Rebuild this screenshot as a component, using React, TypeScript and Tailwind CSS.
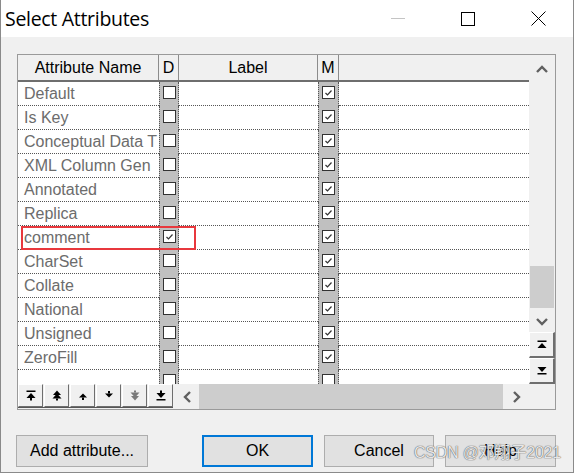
import React from 'react';

type Row = { name: string; d: boolean; m: boolean };

const rows: Row[] = [
  { name: 'Default', d: false, m: true },
  { name: 'Is Key', d: false, m: true },
  { name: 'Conceptual Data T', d: false, m: true },
  { name: 'XML Column Gen', d: false, m: true },
  { name: 'Annotated', d: false, m: true },
  { name: 'Replica', d: false, m: true },
  { name: 'comment', d: true, m: true },
  { name: 'CharSet', d: false, m: true },
  { name: 'Collate', d: false, m: true },
  { name: 'National', d: false, m: true },
  { name: 'Unsigned', d: false, m: true },
  { name: 'ZeroFill', d: false, m: true },
  { name: '', d: false, m: false },
];

const Box = ({ checked }: { checked: boolean }) => (
  <div className="w-[13px] h-[13px] border border-[#333] bg-white flex items-center justify-center">
    {checked && (
      <svg width="11" height="11" viewBox="0 0 11 11">
        <path d="M2.5 6 L4.5 8 L8.5 3.5" fill="none" stroke="#333" strokeWidth="1.2" />
      </svg>
    )}
  </div>
);

const Chevron = ({ dir }: { dir: 'up' | 'down' | 'left' | 'right' }) => {
  const d = {
    up: 'M1 7 L6 2 L11 7',
    down: 'M1 2 L6 7 L11 2',
    left: 'M7 1 L2 6 L7 11',
    right: 'M2 1 L7 6 L2 11',
  }[dir];
  const w = dir === 'up' || dir === 'down' ? 12 : 9;
  const h = dir === 'up' || dir === 'down' ? 9 : 12;
  return (
    <svg width={w} height={h} viewBox={`0 0 ${w} ${h}`}>
      <path d={d} fill="none" stroke="#606060" strokeWidth="2.4" />
    </svg>
  );
};

// small black glyphs for the move buttons
const MoveIcon = ({ kind, gray }: { kind: string; gray?: boolean }) => {
  const c = gray ? '#7a7a7a' : '#000';
  return (
    <svg width="10" height="11" viewBox="0 0 10 11" fill={c}>
      {kind === 'top' && (
        <>
          <rect x="0.5" y="0.5" width="9" height="1.5" />
          <polygon points="5,3 0.5,8 9.5,8" />
          <rect x="4" y="8" width="2" height="2.5" />
        </>
      )}
      {kind === 'pgup' && (
        <>
          <polygon points="5,0.5 1,5 9,5" />
          <polygon points="5,3.5 0.5,8.5 9.5,8.5" />
          <rect x="4" y="8.5" width="2" height="2" />
        </>
      )}
      {kind === 'up' && (
        <>
          <polygon points="5,3.5 1,7.5 9,7.5" />
          <rect x="4" y="7.5" width="2" height="2.5" />
        </>
      )}
      {kind === 'down' && (
        <>
          <rect x="4" y="1" width="2" height="2.5" />
          <polygon points="1,3.5 9,3.5 5,7.5" />
        </>
      )}
      {kind === 'pgdn' && (
        <>
          <rect x="4" y="0.5" width="2" height="2" />
          <polygon points="0.5,2.5 9.5,2.5 5,7.5" />
          <polygon points="1,6 9,6 5,10.5" />
        </>
      )}
      {kind === 'bottom' && (
        <>
          <rect x="4" y="0.5" width="2" height="2.5" />
          <polygon points="0.5,3 9.5,3 5,8" />
          <rect x="0.5" y="9" width="9" height="1.5" />
        </>
      )}
      {kind === 'first' && (
        <>
          <rect x="0.5" y="1.5" width="9" height="1.5" />
          <polygon points="5,4 0.5,9 9.5,9" />
        </>
      )}
      {kind === 'last' && (
        <>
          <polygon points="0.5,2 9.5,2 5,7" />
          <rect x="0.5" y="8" width="9" height="1.5" />
        </>
      )}
    </svg>
  );
};

const App = () => {
  return (
    <div className="w-[574px] h-[473px] bg-[#f0f0f0] border-l border-r border-b border-[#8a8a8a] flex flex-col relative overflow-hidden font-['Liberation_Sans',Arial,sans-serif] text-black">
      {/* Title bar */}
      <div className="h-[37px] bg-white flex items-center shrink-0">
        <span className="pl-[4px] text-[19.5px] font-['Open_Sans','Liberation_Sans',sans-serif] tracking-[-0.3px] leading-none">
          Select Attributes
        </span>
        <div className="ml-auto flex h-full">
          <div className="w-[70px] flex items-center justify-center">
            <div className="w-[14px] h-px bg-[#c4c4c4]" />
          </div>
          <div className="w-[70px] flex items-center justify-center">
            <div className="w-[14px] h-[14px] border border-black" />
          </div>
          <div className="w-[70px] flex items-center justify-center">
            <svg width="15" height="15" viewBox="0 0 15 15">
              <path d="M0.5 0.5 L14.5 14.5 M14.5 0.5 L0.5 14.5" stroke="#000" strokeWidth="1" />
            </svg>
          </div>
        </div>
      </div>

      {/* Grid panel */}
      <div className="mt-[17px] ml-[16px] w-[539px] h-[356px] border border-[#9a9a9a] flex flex-col bg-white">
        <div className="flex h-[329px]">
          {/* table */}
          <div className="w-[511px] h-full overflow-hidden flex flex-col relative">
            <div className="h-[27px] shrink-0 flex bg-[#f0f0f0] border-b-2 border-[#6e6e6e] text-[16px]">
              <div className="w-[141px] border-r border-[#8c8c8c] flex items-center justify-center">Attribute Name</div>
              <div className="w-[20px] border-r border-[#8c8c8c] flex items-center justify-center">D</div>
              <div className="w-[139px] border-r border-[#8c8c8c] flex items-center justify-center">Label</div>
              <div className="w-[21px] border-r border-[#8c8c8c] flex items-center justify-center">M</div>
              <div className="flex-1" />
            </div>
            {rows.map((r, i) => (
              <div key={i} className="h-[24px] shrink-0 flex text-[16px] text-[#6c6c6c]">
                <div className="w-[141px] pl-[6px] pr-[1px] flex items-center border-b border-dotted border-[#555] whitespace-nowrap overflow-hidden">
                  {r.name}
                </div>
                <div className="w-[20px] bg-[#c0c0c0] border-l border-r border-dotted border-[#555] flex justify-center pt-[4px]">
                  <Box checked={r.d} />
                </div>
                <div className="w-[139px] border-b border-dotted border-[#555]" />
                <div className="w-[21px] bg-[#c0c0c0] border-l border-r border-dotted border-[#555] flex justify-center pt-[4px]">
                  <Box checked={r.m} />
                </div>
                <div className="flex-1 border-b border-dotted border-[#555]" />
              </div>
            ))}
            {/* highlight box */}
            <div className="absolute left-[3px] top-[171px] w-[175px] h-[24px] border-2 border-[#e8383d]" />
          </div>

          {/* vertical scrollbar */}
          <div className="w-[26px] h-full bg-[#f0f0f0] flex flex-col">
            <div className="h-[29px] flex items-center justify-center">
              <Chevron dir="up" />
            </div>
            <div className="flex-1 flex flex-col justify-end pb-[2px] px-[1px]">
              <div className="h-[42px] bg-[#cdcdcd]" />
            </div>
            <div className="h-[22px] flex items-center justify-center">
              <Chevron dir="down" />
            </div>
            <div className="h-[26px] border-t border-l border-white border-r-2 border-b-2 border-r-[#6e6e6e] border-b-[#6e6e6e] flex items-center justify-center">
              <MoveIcon kind="first" />
            </div>
            <div className="h-[26px] border-t border-l border-white border-r-2 border-b-2 border-r-[#6e6e6e] border-b-[#6e6e6e] flex items-center justify-center">
              <MoveIcon kind="last" />
            </div>
          </div>
        </div>

        {/* bottom strip */}
        <div className="flex h-[25px] bg-[#f0f0f0]">
          <div className="flex gap-[1px] border-b border-[#555] h-[24px]">
            {['top', 'pgup', 'up', 'down', 'pgdn', 'bottom'].map((k) => (
              <div
                key={k}
                className="w-[25px] h-full border-t border-l border-white border-r border-b border-r-[#6e6e6e] border-b-[#6e6e6e] flex items-center justify-center"
              >
                <MoveIcon kind={k} gray={k === 'pgdn'} />
              </div>
            ))}
          </div>
          <div className="w-[2px]" />
          <div className="w-[24px] flex items-center justify-center">
            <Chevron dir="left" />
          </div>
          <div className="w-[304px] bg-[#cdcdcd]" />
          <div className="w-[26px] flex items-center justify-center">
            <Chevron dir="right" />
          </div>
          <div className="flex-1" />
        </div>
      </div>

      {/* buttons */}
      <div className="mt-[25px] pl-[15px] flex text-[16px]">
        <div className="w-[132px] h-[32px] bg-[#e1e1e1] border border-[#adadad] flex items-center justify-center">
          Add attribute...
        </div>
        <div className="ml-[54px] w-[111px] h-[32px] bg-[#e1e1e1] border-2 border-[#0078d7] flex items-center justify-center">
          OK
        </div>
        <div className="ml-[11px] w-[110px] h-[32px] bg-[#e1e1e1] border border-[#adadad] flex items-center justify-center">
          Cancel
        </div>
        <div className="ml-[11px] w-[111px] h-[32px] bg-[#e1e1e1] border border-[#adadad] flex items-center justify-center">
          Help
        </div>
      </div>

      {/* watermark */}
      <div className="absolute left-[413px] top-[441px] text-[16px] tracking-[-0.2px] text-white/85 [text-shadow:0_0_1px_#555,0_0_1px_#555] font-['Liberation_Sans','Noto_Sans_CJK_SC',sans-serif] whitespace-nowrap">
        CSDN @邓翔子2021
      </div>
    </div>
  );
};

export default App;
